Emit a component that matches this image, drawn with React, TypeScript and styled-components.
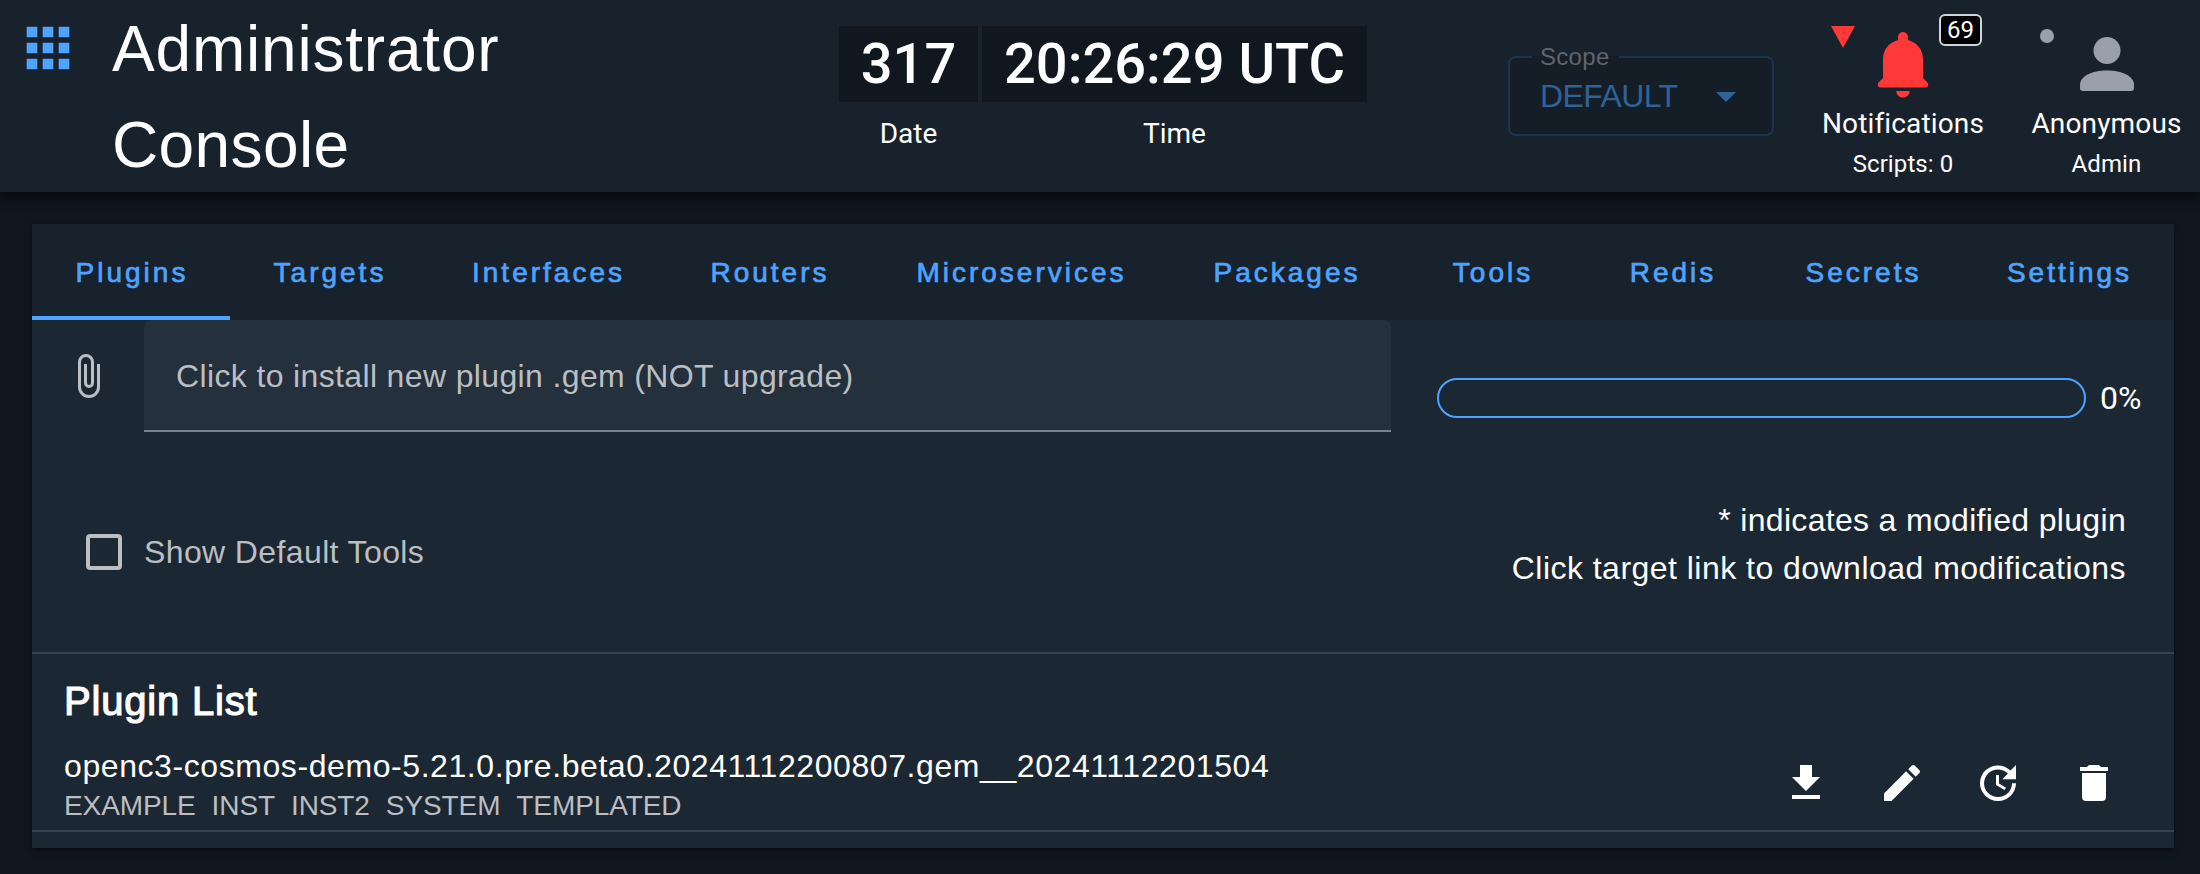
import React from 'react';
import styled, { createGlobalStyle } from 'styled-components';

const sans = '"Liberation Sans", Arial, sans-serif';
const roboto = 'Roboto, "Liberation Sans", sans-serif';

const GlobalStyle = createGlobalStyle`
  * { box-sizing: border-box; }
  body {
    margin: 0;
    background: #11171f;
    color: #fff;
    font-family: ${sans};
    overflow: hidden;
  }
`;

const Page = styled.div`
  width: 2200px;
  height: 874px;
  display: flex;
  flex-direction: column;
  background: #11171f;
  overflow: hidden;
`;

const Header = styled.header`
  position: relative;
  flex: none;
  height: 192px;
  display: flex;
  align-items: flex-start;
  background: #18222d;
  box-shadow: 0 4px 8px -2px rgba(0, 0, 0, 0.4), 0 8px 10px rgba(0, 0, 0, 0.28), 0 2px 20px rgba(0, 0, 0, 0.24);
`;

const AppsButton = styled.div`
  flex: none;
  width: 64px;
  height: 64px;
  margin: 16px 32px 0 16px;
  color: #4da3ff;
`;

const Title = styled.h1`
  margin: 0;
  padding-top: 1px;
  width: 400px;
  display: flex;
  flex-direction: column;
  font-size: 64px;
  font-weight: 400;
  line-height: 96px;
`;

const TitleLine = styled.span<{ $spacing: number }>`
  letter-spacing: ${(p) => p.$spacing}px;
`;

const Clock = styled.div`
  display: flex;
  gap: 4px;
  margin: 26px 0 0 327px;
  font-family: ${roboto};
`;

const ClockCell = styled.div<{ $width: number }>`
  width: ${(p) => p.$width}px;
  display: flex;
  flex-direction: column;
  align-items: center;
`;

const ClockValue = styled.div`
  width: 100%;
  height: 76px;
  background: #11171f;
  font-size: 56px;
  font-weight: 500;
  line-height: 76px;
  text-align: center;
  white-space: nowrap;
`;

const ClockLabel = styled.div`
  margin-top: 15px;
  font-size: 28px;
  line-height: 33px;
`;

const ScopeField = styled.div`
  position: relative;
  width: 266px;
  height: 80px;
  margin: 56px 0 0 141px;
  padding: 0 36px 0 30px;
  display: flex;
  align-items: center;
  justify-content: space-between;
  border: 2px solid #1d344e;
  border-radius: 8px;
  background: #151d26;
  color: #2e6298;
  font-size: 32px;
  letter-spacing: -0.6px;
`;

const ScopeLabel = styled.span`
  position: absolute;
  left: 22px;
  top: -15px;
  height: 28px;
  padding: 0 9px 0 8px;
  line-height: 28px;
  font-size: 24px;
  color: #5f656d;
  letter-spacing: 0.3px;
  background: linear-gradient(#18222d 13px, #151d26 13px);
`;

const Caret = styled.span`
  width: 0;
  height: 0;
  margin-top: 2px;
  border: 10px solid transparent;
  border-top-color: #2e6298;
  border-bottom: 0;
`;

const Status = styled.div<{ $width: number; $left: number }>`
  position: relative;
  width: ${(p) => p.$width}px;
  margin-left: ${(p) => p.$left}px;
  display: flex;
  flex-direction: column;
  align-items: center;
  font-family: ${roboto};
`;

const StatusIcon = styled.div`
  height: 104px;
  display: flex;
`;

const StatusName = styled.div`
  font-size: 28px;
  line-height: 40px;
  letter-spacing: 0.15px;
  white-space: nowrap;
`;

const StatusDetail = styled.div`
  font-size: 24px;
  line-height: 40px;
  letter-spacing: 0.1px;
  white-space: nowrap;
`;

const Badge = styled.span`
  position: absolute;
  left: 116px;
  top: 14px;
  width: 43px;
  height: 32px;
  border: 2px solid #d0d3d7;
  border-radius: 6px;
  background: #000;
  font-size: 24px;
  line-height: 29px;
  text-align: center;
`;

const AlertMark = styled.span`
  position: absolute;
  left: 8px;
  top: 26px;
  border: 12px solid transparent;
  border-top: 22px solid #ff3838;
  border-bottom: 0;
`;

const IdleDot = styled.span`
  position: absolute;
  left: 8px;
  top: 29px;
  width: 14px;
  height: 14px;
  border-radius: 50%;
  background: #9a9fac;
`;

const Panel = styled.main`
  flex: none;
  width: 2142px;
  height: 624px;
  margin: 32px 0 0 32px;
  display: flex;
  flex-direction: column;
  background: #1b2834;
  box-shadow: 0 4px 4px -2px rgba(0, 0, 0, 0.4), 0 2px 8px rgba(0, 0, 0, 0.3);
`;

const Tabs = styled.nav`
  flex: none;
  height: 96px;
  display: flex;
  background: #18222d;
`;

const Tab = styled.div<{ $width: number; $active?: boolean }>`
  width: ${(p) => p.$width}px;
  display: flex;
  align-items: center;
  justify-content: center;
  border-bottom: 4px solid ${(p) => (p.$active ? '#4da3ff' : 'transparent')};
  padding: 6px 0 0 2px;
  color: #4da3ff;
  font-size: 28px;
  letter-spacing: 3px;
  -webkit-text-stroke: 0.7px #4da3ff;
`;

const UploadRow = styled.div`
  flex: none;
  height: 112px;
  display: flex;
`;

const ClipIcon = styled.div`
  width: 112px;
  height: 112px;
  padding: 32px 0 0 32px;
  color: #bbbec2;
`;

const FileField = styled.div`
  width: 1247px;
  height: 112px;
  padding: 0 32px;
  border-radius: 8px 8px 0 0;
  border-bottom: 2px solid #7a838b;
  background: #24303c;
  color: #bbbec2;
  font-size: 32px;
  line-height: 112px;
  letter-spacing: 0.36px;
`;

const Progress = styled.div`
  width: 649px;
  height: 40px;
  margin: 58px 14px 0 46px;
  border: 2px solid #4da3ff;
  border-radius: 20px;
`;

const Percent = styled.div`
  margin-top: 58px;
  font-family: ${roboto};
  font-size: 32px;
  line-height: 40px;
  white-space: nowrap;
`;

const OptionsRow = styled.div`
  flex: none;
  height: 220px;
  padding: 64px 48px 0 54px;
  display: flex;
  justify-content: space-between;
`;

const CheckLabel = styled.div`
  height: 36px;
  margin-top: 38px;
  display: flex;
  align-items: center;
  gap: 22px;
  color: #bbbec2;
  font-size: 32px;
  letter-spacing: 0.38px;
`;

const Checkbox = styled.span`
  width: 36px;
  height: 36px;
  border: 4px solid #bbbec2;
  border-radius: 4px;
`;

const Hint = styled.div`
  text-align: right;
  font-size: 32px;
  line-height: 48px;
`;

const HintLine = styled.div<{ $spacing: number }>`
  letter-spacing: ${(p) => p.$spacing}px;
`;

const List = styled.section`
  flex: none;
  height: 180px;
  border-top: 2px solid #364351;
  border-bottom: 2px solid #364351;
  padding: 0 56px 0 32px;
`;

const ListTitle = styled.h2`
  margin: 0;
  padding-top: 25px;
  font-size: 40px;
  font-weight: 400;
  line-height: 44px;
  letter-spacing: 0.8px;
  -webkit-text-stroke: 1.2px #fff;
`;

const Plugin = styled.div`
  display: flex;
  justify-content: space-between;
`;

const PluginName = styled.div`
  margin-top: 19px;
  font-size: 32px;
  line-height: 48px;
  letter-spacing: 0.58px;
  white-space: nowrap;
`;

const Targets = styled.div`
  display: flex;
  gap: 16px;
  color: #bbbec2;
  font-size: 28px;
  line-height: 32px;
  letter-spacing: -0.1px;
`;

const Actions = styled.div`
  display: flex;
  gap: 48px;
  padding-top: 36px;
`;

const Glyph = ({ d, size }: { d: string; size: number }) => (
  <svg width={size} height={size} viewBox="0 0 24 24" fill="currentColor">
    <path d={d} />
  </svg>
);

const icons = {
  apps: 'M16,20H20V16H16M16,14H20V10H16M10,8H14V4H10M16,8H20V4H16M10,14H14V10H10M4,14H8V10H4M4,20H8V16H4M10,20H14V16H10M4,8H8V4H4V8Z',
  clip: 'M16.5,6V17.5A4,4 0 0,1 12.5,21.5A4,4 0 0,1 8.5,17.5V5A2.5,2.5 0 0,1 11,2.5A2.5,2.5 0 0,1 13.5,5V15.5A1,1 0 0,1 12.5,16.5A1,1 0 0,1 11.5,15.5V6H10V15.5A2.5,2.5 0 0,0 12.5,18A2.5,2.5 0 0,0 15,15.5V5A4,4 0 0,0 11,1A4,4 0 0,0 7,5V17.5A5.5,5.5 0 0,0 12.5,23A5.5,5.5 0 0,0 18,17.5V6H16.5Z',
  download: 'M5,20H19V18H5M19,9H15V3H9V9H5L12,16L19,9Z',
  pencil: 'M20.71,7.04C21.1,6.65 21.1,6 20.71,5.63L18.37,3.29C18,2.9 17.35,2.9 16.96,3.29L15.12,5.12L18.87,8.87M3,17.25V21H6.75L17.81,9.93L14.06,6.18L3,17.25Z',
  update: 'M21,10.12H14.22L16.96,7.3C14.23,4.6 9.81,4.5 7.08,7.2C4.35,9.91 4.35,14.28 7.08,17C9.81,19.7 14.23,19.7 16.96,17C18.32,15.65 19,14.08 19,12.1H21C21,14.08 20.12,16.65 18.36,18.39C14.85,21.87 9.15,21.87 5.64,18.39C2.14,14.92 2.11,9.28 5.62,5.81C9.13,2.34 14.76,2.34 18.27,5.81L21,3V10.12M12.5,8V12.25L16,14.33L15.28,15.54L11,13V8H12.5Z',
  trash: 'M19,4H15.5L14.5,3H9.5L8.5,4H5V6H19M6,19A2,2 0 0,0 8,21H16A2,2 0 0,0 18,19V7H6V19Z',
};

const tabs: [string, number][] = [
  ['Plugins', 198], ['Targets', 198], ['Interfaces', 239], ['Routers', 204],
  ['Microservices', 299], ['Packages', 232], ['Tools', 180], ['Redis', 180],
  ['Secrets', 201], ['Settings', 211],
];

const targets = ['EXAMPLE', 'INST', 'INST2', 'SYSTEM', 'TEMPLATED'];

export default function App() {
  return (
    <Page>
      <GlobalStyle />
      <Header>
        <AppsButton><Glyph d={icons.apps} size={64} /></AppsButton>
        <Title>
          <TitleLine $spacing={0.8}>Administrator</TitleLine>
          <TitleLine $spacing={0.4}>Console</TitleLine>
        </Title>
        <Clock>
          <ClockCell $width={139}>
            <ClockValue>317</ClockValue>
            <ClockLabel>Date</ClockLabel>
          </ClockCell>
          <ClockCell $width={385}>
            <ClockValue>20:26:29 UTC</ClockValue>
            <ClockLabel>Time</ClockLabel>
          </ClockCell>
        </Clock>
        <ScopeField>
          <ScopeLabel>Scope</ScopeLabel>
          DEFAULT
          <Caret />
        </ScopeField>
        <Status $width={160} $left={49}>
          <StatusIcon>
            <svg width="52" height="104" viewBox="0 0 52 104" fill="#ff3838">
              <path d="M21 40v-3a5 5 0 0 1 10 0v3c9 2.500 15 9.500 15 19v19l4 4c2 2 1.500 5.500-1.500 5.500h-45c-3 0-3.500-3.500-1.500-5.500l4-4V59c0-9.500 6-16.500 15-19zM19.300 91h13.400c0 4-3 6.500-6.700 6.500s-6.700-2.500-6.700-6.500z" />
            </svg>
          </StatusIcon>
          <StatusName>Notifications</StatusName>
          <StatusDetail>Scripts: 0</StatusDetail>
          <AlertMark />
          <Badge>69</Badge>
        </Status>
        <Status $width={149} $left={49}>
          <StatusIcon>
            <svg width="54" height="104" viewBox="0 0 54 104" fill="#9a9fac">
              <circle cx="27" cy="50.500" r="13.500" />
              <path d="M0 85c0-9 12-14.500 27-14.500S54 76 54 85v3q0 3-3 3H3q-3 0-3-3z" />
            </svg>
          </StatusIcon>
          <StatusName>Anonymous</StatusName>
          <StatusDetail>Admin</StatusDetail>
          <IdleDot />
        </Status>
      </Header>
      <Panel>
        <Tabs>
          {tabs.map(([name, width], i) => (
            <Tab key={name} $width={width} $active={i === 0}>{name}</Tab>
          ))}
        </Tabs>
        <UploadRow>
          <ClipIcon><Glyph d={icons.clip} size={48} /></ClipIcon>
          <FileField>Click to install new plugin .gem (NOT upgrade)</FileField>
          <Progress />
          <Percent>0%</Percent>
        </UploadRow>
        <OptionsRow>
          <CheckLabel><Checkbox />Show Default Tools</CheckLabel>
          <Hint>
            <HintLine $spacing={0.32}>* indicates a modified plugin</HintLine>
            <HintLine $spacing={0.47}>Click target link to download modifications</HintLine>
          </Hint>
        </OptionsRow>
        <List>
          <ListTitle>Plugin List</ListTitle>
          <Plugin>
            <div>
              <PluginName>openc3-cosmos-demo-5.21.0.pre.beta0.20241112200807.gem__20241112201504</PluginName>
              <Targets>{targets.map((t) => <span key={t}>{t}</span>)}</Targets>
            </div>
            <Actions>
              <Glyph d={icons.download} size={48} />
              <Glyph d={icons.pencil} size={48} />
              <Glyph d={icons.update} size={48} />
              <Glyph d={icons.trash} size={48} />
            </Actions>
          </Plugin>
        </List>
      </Panel>
    </Page>
  );
}
